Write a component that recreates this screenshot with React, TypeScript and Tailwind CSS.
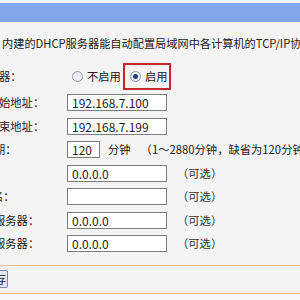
import React from "react";

const font = "font-['Noto_Sans_CJK_SC','Liberation_Sans',sans-serif]";

function Radio({ checked }: { checked?: boolean }) {
  return (
    <span className="flex h-[11px] w-[11px] shrink-0 items-center justify-center rounded-full border border-[#8e9bab] bg-[#eceef0]">
      {checked && <span className="h-[5px] w-[5px] rounded-full bg-[#24406e]" />}
    </span>
  );
}

function Field({ value = "", className = "w-[100px]" }: { value?: string; className?: string }) {
  return (
    <div className={`h-[17px] shrink-0 border border-[#7d7d7d] bg-white px-[4px] text-[12px] leading-[15px] text-[#222] ${className}`}>
      {value}
    </div>
  );
}

function Label({ text, shift }: { text: string; shift: string }) {
  return (
    <div className="w-[67px] shrink-0 overflow-hidden whitespace-nowrap">
      <span className={`block ${shift}`}>{text}</span>
    </div>
  );
}

const Optional = () => <span className="ml-[10px] text-[#333]">（可选）</span>;

export default function App() {
  return (
    <div className={`flex h-[300px] w-[300px] flex-col overflow-hidden bg-[#f4f4f4] text-[11.3px] text-[#222] ${font}`}>
      <div className="h-[3px] shrink-0 bg-[#eef2fa]" />
      <div className="h-[19px] shrink-0 bg-[#82a7ec]" />

      <div className="mt-[13px] h-[16px] shrink-0 overflow-hidden whitespace-nowrap pl-[2px] text-[11.2px] leading-[16px]">
        内建的DHCP服务器能自动配置局域网中各计算机的TCP/IP协议参数。
      </div>

      <div className="mt-[12px] flex h-[27px] shrink-0 items-center">
        <Label text="器：" shift="-ml-[1px]" />
        <div className="ml-[5px] flex items-center gap-[4px]">
          <Radio />
          <span>不启用</span>
        </div>
        <div className="ml-[2px] flex h-[27px] w-[48px] items-center gap-[4px] border-2 border-[#c4262e] pl-[5px]">
          <Radio checked />
          <span>启用</span>
        </div>
      </div>

      <div className="mt-[1px] flex flex-col">
        <div className="flex h-[23.5px] items-center">
          <Label text="始地址：" shift="-ml-[1px]" />
          <Field value="192.168.7.100" />
        </div>
        <div className="flex h-[23.5px] items-center">
          <Label text="束地址：" shift="-ml-[1px]" />
          <Field value="192.168.7.199" />
        </div>
        <div className="flex h-[23.5px] items-center whitespace-nowrap">
          <Label text="期：" shift="-ml-[6px]" />
          <Field value="120" className="w-[33px]" />
          <span className="ml-[8px]">分钟</span>
          <span className="ml-[10px]">（1～2880分钟，缺省为120分钟）</span>
        </div>
        <div className="flex h-[23.5px] items-center">
          <Label text="" shift="" />
          <Field value="0.0.0.0" />
          <Optional />
        </div>
        <div className="flex h-[23.5px] items-center">
          <Label text="名：" shift="-ml-[8px]" />
          <Field />
          <Optional />
        </div>
        <div className="flex h-[23.5px] items-center">
          <Label text="服务器：" shift="-ml-[6px]" />
          <Field value="0.0.0.0" />
          <Optional />
        </div>
        <div className="flex h-[23.5px] items-center">
          <Label text="服务器：" shift="-ml-[6px]" />
          <Field value="0.0.0.0" />
          <Optional />
        </div>
      </div>

      <div className="mt-[9px] h-px shrink-0 bg-[#e2c49c]" />
      <div className="flex h-[27px] shrink-0 items-center">
        <div className="-ml-[30px] flex h-[18px] w-[38px] items-center justify-end rounded-[2px] border border-[#7c87a6] bg-[#e3e7f1] pr-[1px]">
          保存
        </div>
      </div>
      <div className="h-px shrink-0 bg-[#e2c49c]" />
      <div className="flex-1 bg-[#f8f8f8]" />
    </div>
  );
}
